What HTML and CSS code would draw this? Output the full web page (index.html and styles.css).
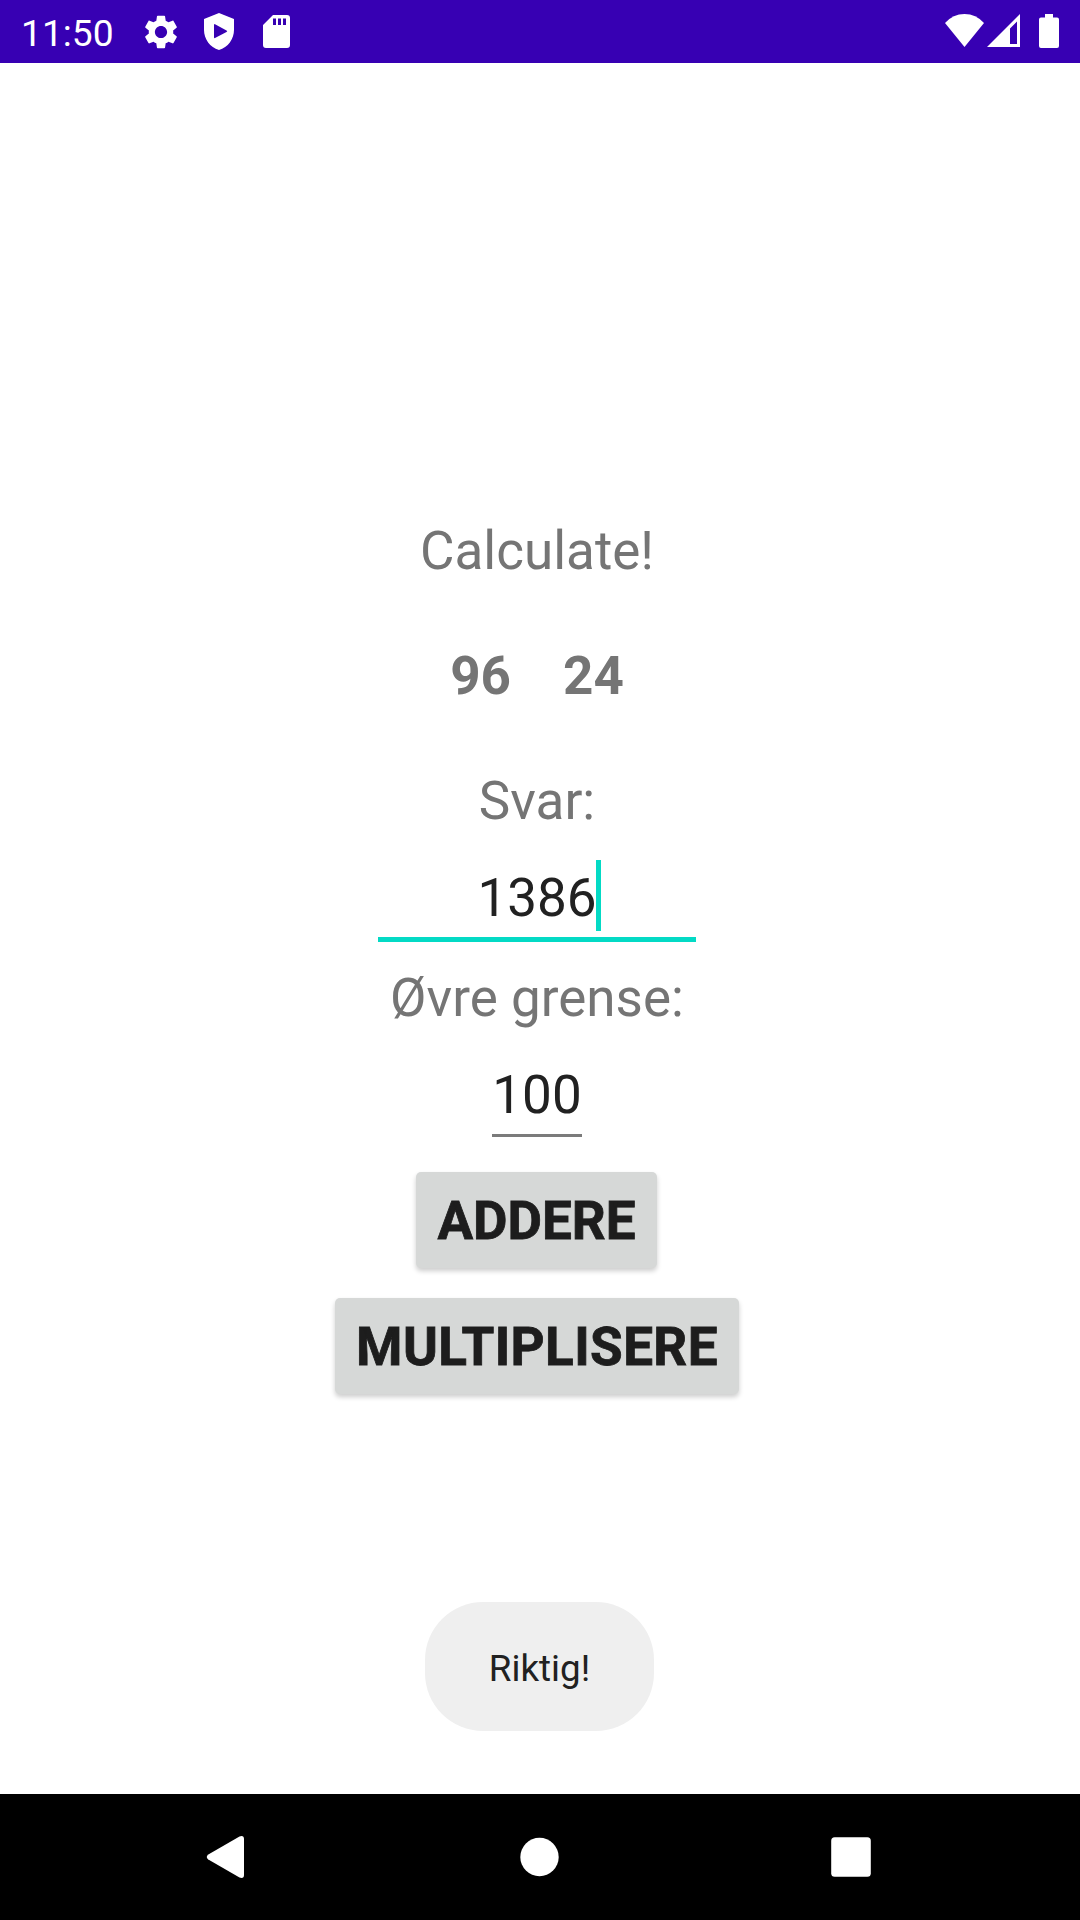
FILE: index.html
```html
<!DOCTYPE html>
<html lang="no">
<head>
<meta charset="utf-8">
<title>Calculate</title>
<link rel="stylesheet" href="styles.css">
</head>
<body>
<div class="screen">
  <header class="status">
    <div class="status-left">
      <span class="clock">11:50</span>
      <svg class="gear" viewBox="2 2 20 20" width="34" height="34"><path d="M19.14 12.94c.04-.3.06-.61.06-.94 0-.32-.02-.64-.07-.94l2.03-1.58c.18-.14.23-.41.12-.61l-1.92-3.32c-.12-.22-.37-.29-.59-.22l-2.39.96c-.5-.38-1.03-.7-1.62-.94L14.4 2.81c-.04-.24-.24-.41-.48-.41h-3.84c-.24 0-.43.17-.47.41l-.36 2.54c-.59.24-1.13.57-1.62.94l-2.39-.96c-.22-.08-.47 0-.59.22L2.74 8.87c-.12.21-.08.47.12.61l2.03 1.58c-.05.3-.09.63-.09.94s.02.64.07.94l-2.03 1.58c-.18.14-.23.41-.12.61l1.92 3.32c.12.22.37.29.59.22l2.39-.96c.5.38 1.03.7 1.62.94l.36 2.54c.05.24.24.41.48.41h3.84c.24 0 .44-.17.47-.41l.36-2.54c.59-.24 1.13-.56 1.62-.94l2.39.96c.22.08.47 0 .59-.22l1.92-3.32c.12-.22.07-.47-.12-.61zM12 15.6c-1.98 0-3.6-1.62-3.6-3.6s1.62-3.6 3.6-3.6 3.6 1.62 3.6 3.6-1.62 3.6-3.6 3.6z"/></svg>
      <svg class="shield" viewBox="0 0 30 37" width="30" height="37"><path fill-rule="evenodd" d="M15 0 30 6V17C30 26 24 34.500 15 37 6 34.500 0 26 0 17V6ZM10 12.500V24Q10 26 11.500 24.800L22.500 19Q24 18.200 22.500 17.400L11.500 11.400Q10 10.500 10 12.500Z"/></svg>
      <svg class="card" viewBox="0 0 27 33" width="27" height="33"><path fill-rule="evenodd" d="M10 0H24Q27 0 27 3V30Q27 33 24 33H3Q0 33 0 30V10ZM10 3.500V10H13V3.500ZM15 3.500V10H18V3.500ZM20 3.500V10H23V3.500Z"/></svg>
    </div>
    <div class="status-right">
      <svg viewBox="0 0 39 33" width="39" height="33"><path d="M0 9Q8 0 19.500 0T39 9L19.500 33Z"/></svg>
      <svg class="signal" viewBox="0 0 33 33" width="33" height="33"><path fill-rule="evenodd" d="M33 0V33H0ZM30 7.500 23 14.500V30H30Z"/></svg>
      <svg class="battery" viewBox="0 0 20 34" width="20" height="34"><path d="M6 0H14V3.500H18Q20 3.500 20 5.500V32Q20 34 18 34H2Q0 34 0 32V5.500Q0 3.500 2 3.500H6Z"/></svg>
    </div>
  </header>
  <main class="content">
    <p class="label title">Calculate!</p>
    <div class="numbers"><b>96</b><b>24</b></div>
    <p class="label">Svar:</p>
    <div class="field answer">1386<span class="caret"></span></div>
    <p class="label limit-label">Øvre grense:</p>
    <div class="field limit">100</div>
    <button class="button add">ADDERE</button>
    <button class="button multiply">MULTIPLISERE</button>
    <div class="toast">Riktig!</div>
  </main>
  <nav class="navigation">
    <svg viewBox="0 0 42 42" width="42" height="42"><path d="M3.300 18.600 34.500.4Q39-1 39 3V39Q39 43 34.500 41.600L3.300 23.400Q.2 21 3.300 18.600Z"/></svg>
    <svg viewBox="0 0 42 42" width="42" height="42"><circle cx="21.500" cy="21" r="19.200"/></svg>
    <svg viewBox="0 0 42 42" width="42" height="42"><rect x="1.200" y="1.200" width="39.600" height="39.600" rx="3.500"/></svg>
  </nav>
</div>
</body>
</html>
```
FILE: styles.css
```css
* { box-sizing: border-box; }
body { margin: 0; background: #fff; font-family: Roboto, sans-serif; }
svg { display: block; fill: #fff; flex: none; }
p { margin: 0; }
.screen { width: 1080px; height: 1920px; display: flex; flex-direction: column; overflow: hidden; }
.status { height: 63px; background: #3700b3; display: flex; justify-content: space-between; padding: 0 21px 0 21px; }
.status-left, .status-right { display: flex; align-items: flex-start; }
.clock { width: 92px; padding-top: 11px; font-size: 37.2px; line-height: 44px; color: #fff; }
.gear { margin: 15px 0 0 31px; }
.shield { margin: 13px 0 0 26px; }
.card { margin: 15px 0 0 29px; }
.status-right svg { margin-top: 14px; }
.status-right .signal { margin-left: 3px; }
.status-right .battery { margin-left: 19px; }
.content { height: 1731px; padding: 457px 6px 0 0; display: flex; flex-direction: column; align-items: center; font-size: 53px; line-height: 62px; }
.label { color: #757575; }
.numbers { display: flex; gap: 52px; margin: 63px 0; color: #757575; }
.field { color: #212121; text-align: center; }
.answer { width: 318px; height: 75px; margin-top: 35px; border-bottom: 5px solid #03dac5; position: relative; }
.caret { position: absolute; left: 218px; top: -7px; width: 5px; height: 71px; background: #03dac5; }
.limit-label { margin-top: 25px; }
.limit { width: 90px; height: 73px; margin-top: 35px; border-bottom: 3px solid #7b7b7b; }
.button { height: 96px; padding: 2px 0 0; border: 0; border-radius: 5px; background: #d6d8d7; color: #1d1d1d; font: bold 53px/62px Roboto, sans-serif; -webkit-text-stroke: .8px #1d1d1d; box-shadow: 0 3px 5px rgba(0, 0, 0, .2); }
.add { width: 241px; margin: 35px 1px 0 0; }
.multiply { width: 404px; margin-top: 30px; letter-spacing: .4px; }
.toast { width: 229px; height: 129px; margin: 208px -5px 0 0; padding-top: 45px; border-radius: 58px; background: #efefef; color: #212121; font-size: 36.75px; line-height: 44px; text-align: center; }
.navigation { height: 126px; padding: 0 208px 0 205px; background: #000; display: flex; justify-content: space-between; align-items: center; }
```
